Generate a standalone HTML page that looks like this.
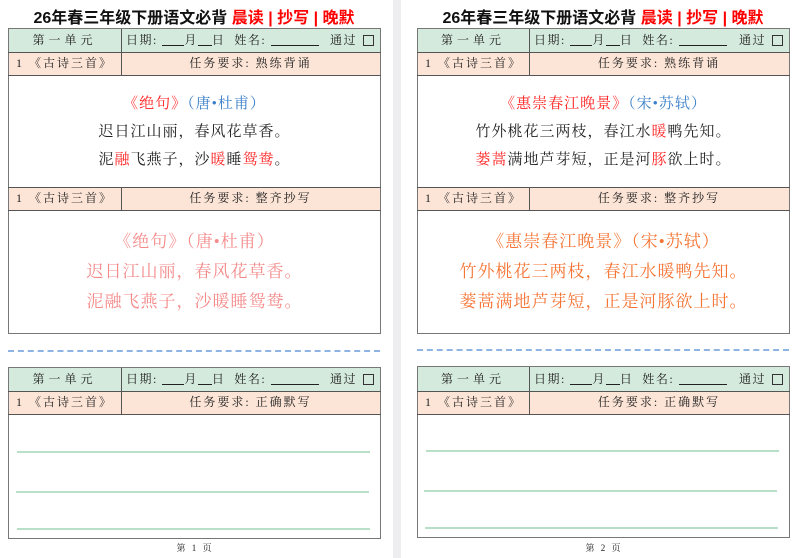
<!DOCTYPE html>
<html><head><meta charset="utf-8"><style>
*{margin:0;padding:0;box-sizing:border-box}
body{width:800px;height:558px;background:#fff;position:relative;overflow:hidden;font-family:"Liberation Serif","Noto Serif CJK SC",serif;color:#222}
.a{position:absolute}
.gap{left:393px;top:0;width:8px;height:558px;background:#eeeef0}
.title{font-family:"Liberation Sans","Noto Sans CJK SC",sans-serif;font-weight:bold;font-size:16px;top:4px;width:372px;text-align:center;color:#111;white-space:nowrap}
.title span{color:#f00}
.box{border:1.5px solid #777;background:#fff}
.g{background:#d4eadc}
.p{background:#fce4d6}
.cell{position:absolute;font-size:12px;line-height:22px;white-space:nowrap;letter-spacing:2px}
.hd{position:absolute;font-size:12px;line-height:22px;white-space:nowrap;letter-spacing:1.5px;display:flex;align-items:center}
.u{display:inline-block;border-bottom:1px solid #222;height:12px;vertical-align:-1px}
.hl{position:absolute;height:1px;background:#555}
.vl{position:absolute;width:1px;background:#555}
.dash{position:absolute;height:0;border-top:2px dashed #8fb3e3;width:372px}
.ln{position:absolute;height:2px;background:#b8e0c8}
.c{position:absolute;text-align:center;white-space:nowrap;font-size:15px;letter-spacing:1px}
.c2{font-size:17px;letter-spacing:1px}
.r{color:#f22}.b{color:#3a7fc8}
.pk{color:#f48a8a}.or{color:#f57433}
.chk{display:inline-block;width:11px;height:11px;border:1px solid #333;margin-left:6px}
.ft{position:absolute;top:541px;font-size:9px;width:60px;text-align:center;letter-spacing:2px}
</style></head><body>
<div class="a gap"></div>

<!-- LEFT PAGE -->
<div class="a title" style="left:8px">26年春三年级下册语文必背 <span>晨读 | 抄写 | 晚默</span></div>
<div class="a box" style="left:8px;top:28px;width:373px;height:306px"></div>
<div class="a g" style="left:9px;top:29px;width:371px;height:23px"></div>
<div class="a p" style="left:9px;top:52px;width:371px;height:23px"></div>
<div class="a p" style="left:9px;top:187px;width:371px;height:23px"></div>
<div class="hl" style="left:8px;top:52px;width:373px"></div>
<div class="hl" style="left:8px;top:75px;width:373px"></div>
<div class="hl" style="left:8px;top:187px;width:373px"></div>
<div class="hl" style="left:8px;top:210px;width:373px"></div>
<div class="vl" style="left:121px;top:29px;height:46px"></div>
<div class="vl" style="left:121px;top:187px;height:23px"></div>
<div class="cell" style="left:8px;top:29px;width:113px;text-align:center;letter-spacing:4px">第一单元</div>
<div class="hd" style="left:126px;top:29px;width:248px">日期:&nbsp;<span class="u" style="width:22px"></span>月<span class="u" style="width:14px"></span>日&nbsp;&nbsp;姓名:&nbsp;<span class="u" style="width:48px"></span><span style="flex:1"></span>通过<span class="chk"></span></div>
<div class="cell" style="left:16px;top:52px">1 《古诗三首》</div>
<div class="cell" style="left:121px;top:52px;width:259px;text-align:center">任务要求: 熟练背诵</div>
<div class="cell" style="left:16px;top:187px">1 《古诗三首》</div>
<div class="cell" style="left:121px;top:187px;width:259px;text-align:center">任务要求: 整齐抄写</div>
<div class="c" style="left:8px;width:373px;top:92px"><span class="r">《绝句》</span><span class="b">（唐•杜甫）</span></div>
<div class="c" style="left:8px;width:373px;top:120px">迟日江山丽，春风花草香。</div>
<div class="c" style="left:8px;width:373px;top:148px">泥<span class="r">融</span>飞燕子，沙<span class="r">暖</span>睡<span class="r">鸳鸯</span>。</div>
<div class="c c2 pk" style="left:8px;width:373px;top:227px">《绝句》（唐•杜甫）</div>
<div class="c c2 pk" style="left:8px;width:373px;top:257px">迟日江山丽，春风花草香。</div>
<div class="c c2 pk" style="left:8px;width:373px;top:287px">泥融飞燕子，沙暖睡鸳鸯。</div>

<div class="dash" style="left:8px;top:350px"></div>

<div class="a box" style="left:8px;top:367px;width:373px;height:172px"></div>
<div class="a g" style="left:9px;top:368px;width:371px;height:23px"></div>
<div class="a p" style="left:9px;top:391px;width:371px;height:23px"></div>
<div class="hl" style="left:8px;top:391px;width:373px"></div>
<div class="hl" style="left:8px;top:414px;width:373px"></div>
<div class="vl" style="left:121px;top:368px;height:46px"></div>
<div class="cell" style="left:8px;top:368px;width:113px;text-align:center;letter-spacing:4px">第一单元</div>
<div class="hd" style="left:126px;top:368px;width:248px">日期:&nbsp;<span class="u" style="width:22px"></span>月<span class="u" style="width:14px"></span>日&nbsp;&nbsp;姓名:&nbsp;<span class="u" style="width:48px"></span><span style="flex:1"></span>通过<span class="chk"></span></div>
<div class="cell" style="left:16px;top:391px">1 《古诗三首》</div>
<div class="cell" style="left:121px;top:391px;width:259px;text-align:center">任务要求: 正确默写</div>
<div class="ln" style="left:17px;top:451px;width:353px"></div>
<div class="ln" style="left:16px;top:491px;width:353px"></div>
<div class="ln" style="left:17px;top:528px;width:353px"></div>
<div class="ft" style="left:165px">第 1 页</div>

<!-- RIGHT PAGE -->
<div class="a title" style="left:417px">26年春三年级下册语文必背 <span>晨读 | 抄写 | 晚默</span></div>
<div class="a box" style="left:417px;top:28px;width:373px;height:306px"></div>
<div class="a g" style="left:418px;top:29px;width:371px;height:23px"></div>
<div class="a p" style="left:418px;top:52px;width:371px;height:23px"></div>
<div class="a p" style="left:418px;top:187px;width:371px;height:23px"></div>
<div class="hl" style="left:417px;top:52px;width:373px"></div>
<div class="hl" style="left:417px;top:75px;width:373px"></div>
<div class="hl" style="left:417px;top:187px;width:373px"></div>
<div class="hl" style="left:417px;top:210px;width:373px"></div>
<div class="vl" style="left:529px;top:29px;height:46px"></div>
<div class="vl" style="left:529px;top:187px;height:23px"></div>
<div class="cell" style="left:417px;top:29px;width:112px;text-align:center;letter-spacing:4px">第一单元</div>
<div class="hd" style="left:534px;top:29px;width:249px">日期:&nbsp;<span class="u" style="width:22px"></span>月<span class="u" style="width:14px"></span>日&nbsp;&nbsp;姓名:&nbsp;<span class="u" style="width:48px"></span><span style="flex:1"></span>通过<span class="chk"></span></div>
<div class="cell" style="left:425px;top:52px">1 《古诗三首》</div>
<div class="cell" style="left:529px;top:52px;width:260px;text-align:center">任务要求: 熟练背诵</div>
<div class="cell" style="left:425px;top:187px">1 《古诗三首》</div>
<div class="cell" style="left:529px;top:187px;width:260px;text-align:center">任务要求: 整齐抄写</div>
<div class="c" style="left:417px;width:373px;top:92px"><span class="r">《惠崇春江晚景》</span><span class="b">（宋•苏轼）</span></div>
<div class="c" style="left:417px;width:373px;top:120px">竹外桃花三两枝，春江水<span class="r">暖</span>鸭先知。</div>
<div class="c" style="left:417px;width:373px;top:148px"><span class="r">蒌蒿</span>满地芦芽短，正是河<span class="r">豚</span>欲上时。</div>
<div class="c c2 or" style="left:417px;width:373px;top:227px">《惠崇春江晚景》（宋•苏轼）</div>
<div class="c c2 or" style="left:417px;width:373px;top:257px">竹外桃花三两枝，春江水暖鸭先知。</div>
<div class="c c2 or" style="left:417px;width:373px;top:287px">蒌蒿满地芦芽短，正是河豚欲上时。</div>

<div class="dash" style="left:417px;top:349px"></div>

<div class="a box" style="left:417px;top:366px;width:373px;height:172px"></div>
<div class="a g" style="left:418px;top:367px;width:371px;height:24px"></div>
<div class="a p" style="left:418px;top:391px;width:371px;height:23px"></div>
<div class="hl" style="left:417px;top:391px;width:373px"></div>
<div class="hl" style="left:417px;top:414px;width:373px"></div>
<div class="vl" style="left:529px;top:367px;height:47px"></div>
<div class="cell" style="left:417px;top:368px;width:112px;text-align:center;letter-spacing:4px">第一单元</div>
<div class="hd" style="left:534px;top:368px;width:249px">日期:&nbsp;<span class="u" style="width:22px"></span>月<span class="u" style="width:14px"></span>日&nbsp;&nbsp;姓名:&nbsp;<span class="u" style="width:48px"></span><span style="flex:1"></span>通过<span class="chk"></span></div>
<div class="cell" style="left:425px;top:391px">1 《古诗三首》</div>
<div class="cell" style="left:529px;top:391px;width:260px;text-align:center">任务要求: 正确默写</div>
<div class="ln" style="left:426px;top:450px;width:353px"></div>
<div class="ln" style="left:424px;top:490px;width:353px"></div>
<div class="ln" style="left:425px;top:527px;width:353px"></div>
<div class="ft" style="left:574px">第 2 页</div>
</body></html>
